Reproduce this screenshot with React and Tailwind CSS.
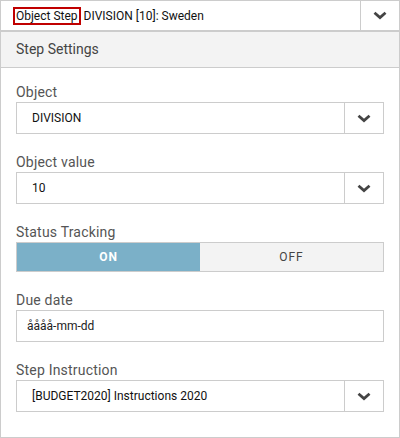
import React from "react";

function Chevron() {
  return (
    <svg width="14" height="9" viewBox="0 0 14 9" fill="none">
      <path d="M1.5 1.8 L7 6.6 L12.5 1.8" stroke="#444" strokeWidth="2.8" />
    </svg>
  );
}

function Label({ children }) {
  return (
    <div className="h-5 leading-5 text-[14px] text-[#555] tracking-[0.2px]">
      {children}
    </div>
  );
}

function Select({ value }) {
  return (
    <div className="flex h-[32px] border border-[#ccc] bg-white">
      <div className="flex-1 flex items-center pl-[15px] text-[12px] text-[#111]">
        {value}
      </div>
      <div className="w-[39px] border-l border-[#ccc] flex items-center justify-center">
        <Chevron />
      </div>
    </div>
  );
}

export default function App() {
  return (
    <div
      className="w-[400px] h-[438px] bg-white"
      style={{ fontFamily: "Roboto, 'Liberation Sans', sans-serif" }}
    >
      <div className="flex h-[32px] border border-b-2 border-[#ccc]">
        <div className="flex-1 flex items-center pl-[12px] text-[12px] text-[#111]">
          <span className="border-2 border-[#c00000] px-[1px] leading-[14px] mr-[3px]">
            Object Step
          </span>
          DIVISION [10]: Sweden
        </div>
        <div className="w-[39px] border-l border-[#ccc] flex items-center justify-center">
          <Chevron />
        </div>
      </div>

      <div className="border-x border-b border-[#ccc] h-[406px]">
        <div className="h-[36px] bg-[#f3f3f3] border-b border-[#ccc] flex items-center pl-[15px] text-[14px] text-[#444]">
          Step Settings
        </div>

        <div className="px-[15px] pt-[14px] flex flex-col gap-[18px]">
          <div>
            <Label>Object</Label>
            <Select value="DIVISION" />
          </div>
          <div>
            <Label>Object value</Label>
            <Select value="10" />
          </div>
          <div>
            <Label>Status Tracking</Label>
            <div className="flex h-[30px] border border-[#ccc]">
              <div className="flex-1 bg-[#7bb0c8] flex items-center justify-center text-white font-bold text-[12px] tracking-[1px]">
                ON
              </div>
              <div className="flex-1 bg-[#f3f3f3] flex items-center justify-center text-[#444] text-[12px] tracking-[1px]">
                OFF
              </div>
            </div>
          </div>
          <div>
            <Label>Due date</Label>
            <div className="h-[32px] border border-[#ccc] flex items-center pl-[10px] text-[12px] text-[#222]">
              åååå-mm-dd
            </div>
          </div>
          <div>
            <Label>Step Instruction</Label>
            <Select value="[BUDGET2020] Instructions 2020" />
          </div>
        </div>
      </div>
    </div>
  );
}
